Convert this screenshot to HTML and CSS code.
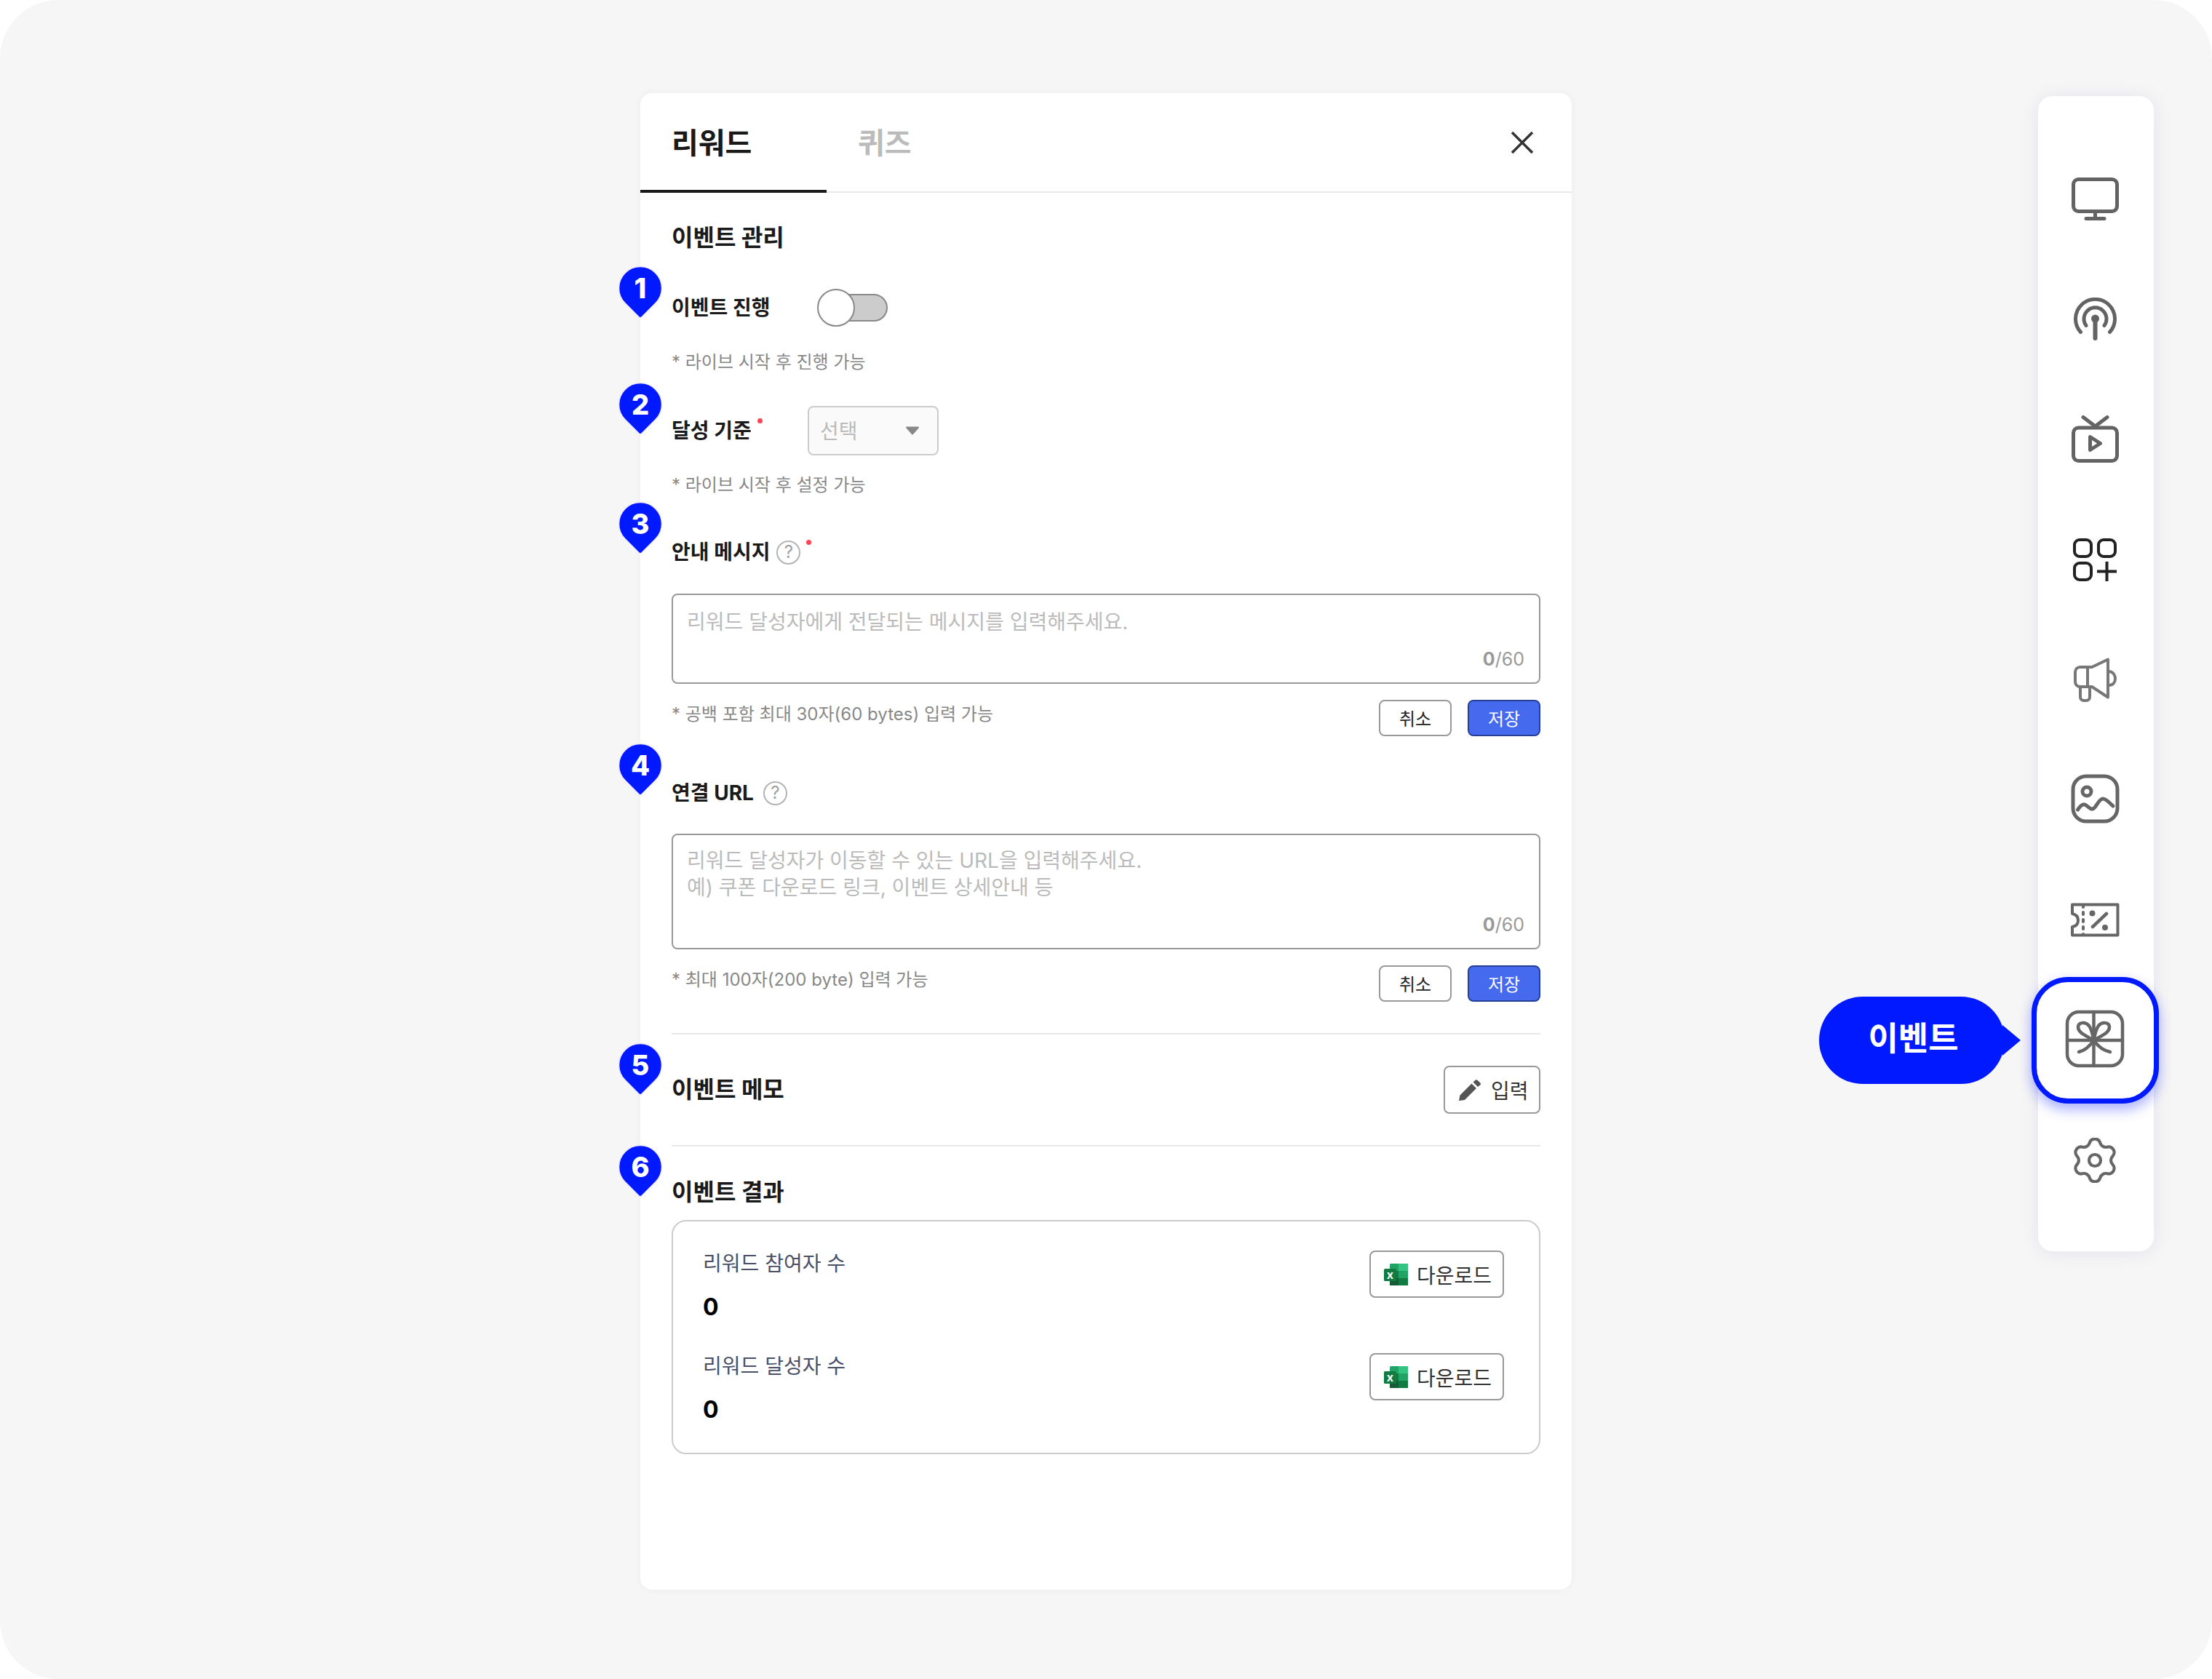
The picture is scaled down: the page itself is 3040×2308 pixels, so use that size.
FILE: index.html
```html
<!DOCTYPE html>
<html lang="ko">
<head>
<meta charset="UTF-8" />
<title>이벤트 관리</title>
<meta name="viewport" content="width=device-width, initial-scale=1" />
<link rel="stylesheet" href="styles.css">
</head>
<body>

<div class="stage">
  <main class="panel">
    <div class="tabs">
      <div class="tab tab-active">리워드</div>
      <div class="tab">퀴즈</div>
      <button class="close-btn" type="button" aria-label="닫기">
        <svg width="32" height="32" viewBox="0 0 32 32"><path d="M2 2 30 30M30 2 2 30" stroke="#333" stroke-width="3.5" fill="none"/></svg>
      </button>
    </div>

    <div class="panel-body">
      <h2 class="title title-first">이벤트 관리</h2>

      <!-- 1 -->
      <div class="row row-toggle">
        <span class="pin pin-1"><svg class="pin-shape" width="64" height="75" viewBox="0 0 64 75"><path d="M11.100 52.900A29.500 29.500 0 1 1 52.900 52.900L34 71.800Q32 73.700 30 71.800Z" fill="#0019ff" stroke="#f0e8ff" stroke-width="1.500"/></svg><span class="pin-num">1</span></span>
        <label class="row-label">이벤트 진행</label>
        <span class="toggle"><span class="toggle-track"></span><span class="toggle-knob"></span></span>
      </div>
      <p class="note note-1">* 라이브 시작 후 진행 가능</p>

      <!-- 2 -->
      <div class="row row-select">
        <span class="pin pin-2"><svg class="pin-shape" width="64" height="75" viewBox="0 0 64 75"><path d="M11.100 52.900A29.500 29.500 0 1 1 52.900 52.900L34 71.800Q32 73.700 30 71.800Z" fill="#0019ff" stroke="#f0e8ff" stroke-width="1.500"/></svg><span class="pin-num">2</span></span>
        <label class="row-label">달성 기준<i class="req"></i></label>
        <div class="select">
          <span class="select-text">선택</span>
          <svg width="20" height="12" viewBox="0 0 20 12"><path d="M2 1.500H18L10 10.500Z" fill="#888" stroke="#888" stroke-width="2" stroke-linejoin="round"/></svg>
        </div>
      </div>
      <p class="note note-2">* 라이브 시작 후 설정 가능</p>

      <!-- 3 -->
      <div class="row row-head row-msg">
        <span class="pin pin-3"><svg class="pin-shape" width="64" height="75" viewBox="0 0 64 75"><path d="M11.100 52.900A29.500 29.500 0 1 1 52.900 52.900L34 71.800Q32 73.700 30 71.800Z" fill="#0019ff" stroke="#f0e8ff" stroke-width="1.500"/></svg><span class="pin-num">3</span></span>
        <label class="row-label-auto">안내 메시지</label>
        <span class="help">?</span>
        <i class="req"></i>
      </div>
      <div class="textarea textarea-msg">
        <div class="placeholder">리워드 달성자에게 전달되는 메시지를 입력해주세요.</div>
        <div class="counter"><b>0</b>/60</div>
      </div>
      <div class="action-row">
        <p class="note">* 공백 포함 최대 30자(60 bytes) 입력 가능</p>
        <div class="actions">
          <button class="btn" type="button">취소</button>
          <button class="btn btn-primary" type="button">저장</button>
        </div>
      </div>

      <!-- 4 -->
      <div class="row row-head row-url">
        <span class="pin pin-4"><svg class="pin-shape" width="64" height="75" viewBox="0 0 64 75"><path d="M11.100 52.900A29.500 29.500 0 1 1 52.900 52.900L34 71.800Q32 73.700 30 71.800Z" fill="#0019ff" stroke="#f0e8ff" stroke-width="1.500"/></svg><span class="pin-num">4</span></span>
        <label class="row-label-auto">연결 URL</label>
        <span class="help">?</span>
      </div>
      <div class="textarea textarea-url">
        <div class="placeholder">리워드 달성자가 이동할 수 있는 URL을 입력해주세요.<br>예) 쿠폰 다운로드 링크, 이벤트 상세안내 등</div>
        <div class="counter"><b>0</b>/60</div>
      </div>
      <div class="action-row">
        <p class="note">* 최대 100자(200 byte) 입력 가능</p>
        <div class="actions">
          <button class="btn" type="button">취소</button>
          <button class="btn btn-primary" type="button">저장</button>
        </div>
      </div>

      <hr class="divider divider-1">

      <!-- 5 -->
      <div class="row row-memo">
        <span class="pin pin-5"><svg class="pin-shape" width="64" height="75" viewBox="0 0 64 75"><path d="M11.100 52.900A29.500 29.500 0 1 1 52.900 52.900L34 71.800Q32 73.700 30 71.800Z" fill="#0019ff" stroke="#f0e8ff" stroke-width="1.500"/></svg><span class="pin-num">5</span></span>
        <h2 class="title">이벤트 메모</h2>
        <button class="btn-outline btn-memo" type="button">
          <svg width="30" height="29" viewBox="0 0 30 29"><path d="M0 29 1.500 21.500 17.500 5.500 24 12 8 28 1 29ZM19.500 3.500 22.500 .8C23.500 0 24.500 0 25.500.8L29.500 4.700C30.200 5.500 30.200 6.500 29.500 7.300L26 10Z" fill="#555"/></svg>
          <span>입력</span>
        </button>
      </div>

      <hr class="divider divider-2">

      <!-- 6 -->
      <div class="result-head">
        <span class="pin pin-6"><svg class="pin-shape" width="64" height="75" viewBox="0 0 64 75"><path d="M11.100 52.900A29.500 29.500 0 1 1 52.900 52.900L34 71.800Q32 73.700 30 71.800Z" fill="#0019ff" stroke="#f0e8ff" stroke-width="1.500"/></svg><span class="pin-num">6</span></span>
        <h2 class="title">이벤트 결과</h2>
      </div>
      <section class="result-box">
        <div class="result-row">
          <div>
            <div class="result-label">리워드 참여자 수</div>
            <div class="result-value">0</div>
          </div>
          <button class="btn-outline btn-download" type="button">
            <svg width="33" height="30" viewBox="0 0 33 30"><rect x="8" width="25" height="30" rx="1.500" fill="#21a366"/><rect x="20" width="13" height="10" fill="#33c481"/><rect x="20" y="10" width="13" height="10" fill="#21a366"/><rect x="8" y="10" width="12" height="10" fill="#107c41"/><rect x="8" y="20" width="12" height="10" fill="#185c37"/><rect x="20" y="20" width="13" height="10" fill="#107c41"/><rect y="7" width="17" height="17" rx="1.500" fill="#107c41"/><text x="8.500" y="20.500" class="xl-mark">x</text></svg>
            <span>다운로드</span>
          </button>
        </div>
        <div class="result-row">
          <div>
            <div class="result-label">리워드 달성자 수</div>
            <div class="result-value">0</div>
          </div>
          <button class="btn-outline btn-download" type="button">
            <svg width="33" height="30" viewBox="0 0 33 30"><rect x="8" width="25" height="30" rx="1.500" fill="#21a366"/><rect x="20" width="13" height="10" fill="#33c481"/><rect x="20" y="10" width="13" height="10" fill="#21a366"/><rect x="8" y="10" width="12" height="10" fill="#107c41"/><rect x="8" y="20" width="12" height="10" fill="#185c37"/><rect x="20" y="20" width="13" height="10" fill="#107c41"/><rect y="7" width="17" height="17" rx="1.500" fill="#107c41"/><text x="8.500" y="20.500" class="xl-mark">x</text></svg>
            <span>다운로드</span>
          </button>
        </div>
      </section>
    </div>
  </main>

  <aside class="sidebar">
    <div class="side-item">
      <svg width="65" height="59" viewBox="0 0 65 59" fill="none" stroke="#636363" stroke-width="5" stroke-linecap="round"><rect x="2.500" y="2.500" width="60" height="44" rx="7"/><path d="M32.500 47V56M20 56.500H45"/></svg>
    </div>
    <div class="side-item">
      <svg width="59" height="59" viewBox="0 0 59 59" fill="none" stroke="#636363" stroke-width="5" stroke-linecap="round"><path d="M9.500 47.500A27 27 0 1 1 49.500 47.500"/><path d="M17 38.500A15.500 15.500 0 1 1 42 38.500"/><circle cx="29.500" cy="29" r="5.500" fill="#636363" stroke="none"/><path d="M29.500 30V56" stroke-width="6"/></svg>
    </div>
    <div class="side-item">
      <svg width="65" height="65" viewBox="0 0 65 65" fill="none" stroke="#636363" stroke-width="5" stroke-linecap="round" stroke-linejoin="round"><rect x="2.500" y="17" width="60" height="45.500" rx="7"/><path d="M16 2.500 32.500 15 49 2.500"/><path d="M25.500 29.500 39.500 38.500 25.500 47.500Z"/></svg>
    </div>
    <div class="side-item">
      <svg width="60" height="59" viewBox="0 0 60 59" fill="none" stroke="#222" stroke-width="4"><rect x="2" y="2" width="23" height="23" rx="7"/><rect x="35" y="2" width="23" height="23" rx="7"/><rect x="2" y="34" width="23" height="23" rx="7"/><path d="M46.500 32V59M33 45.500H60"/></svg>
    </div>
    <div class="side-item">
      <svg width="59" height="61" viewBox="0 0 59 61" fill="none" stroke="#777" stroke-width="4" stroke-linejoin="round"><path d="M47 2.500 25 13H9C5 13 2 16 2 20V33C2 37 5 40 9 40H25L47 54.500Z"/><path d="M19 13V40"/><path d="M9 40V54C9 57 11 59 14 59H17C20 59 22 57 22 54V40"/><path d="M48 19C54 19 57 24 57 29C57 34 54 38 48 38"/></svg>
    </div>
    <div class="side-item">
      <svg class="icon-up" width="67" height="68" viewBox="0 0 67 68" fill="none" stroke="#666" stroke-width="5" stroke-linecap="round"><rect x="3" y="3" width="61" height="62" rx="18"/><circle cx="22" cy="24" r="6"/><path d="M9.500 49C13 44 16 41 19 42C23 43 26 49 30 48C35 47 38 34 44 34C49 34 53 40 58 44"/></svg>
    </div>
    <div class="side-item">
      <svg width="68" height="47" viewBox="0 0 68 47" fill="none" stroke="#666" stroke-width="4" stroke-linecap="round" stroke-linejoin="round"><path d="M3 2.500H65.500V44.500H3V33C9 32 11 28 11 24C11 19 8 16 3 15Z"/><path d="M18 3V44" stroke-dasharray="3 7"/><path d="M31 33 50 15" stroke-width="4.500"/><circle cx="30.500" cy="14.500" r="2" fill="#666"/><circle cx="48" cy="34" r="2" fill="#666"/></svg>
    </div>
    <div class="side-item side-item-active">
      <div class="tooltip">
        <span class="tooltip-body">이벤트</span>
        <span class="tooltip-tip"></span>
      </div>
      <span class="focus-ring"></span>
      <svg class="icon-up" width="82" height="80" viewBox="0 0 82 80" fill="none" stroke="#666" stroke-width="4.500" stroke-linecap="round"><rect x="3" y="3" width="76" height="74" rx="16"/><path d="M39.500 3V77M3 42H79"/><path d="M39.500 42C30 36 18 32 18 24C18 17 28 16 33 22C36 26 38 34 39.500 42Z" fill="#fff"/><path d="M39.500 42C49 36 61 32 61 24C61 17 51 16 46 22C43 26 41 34 39.500 42Z" fill="#fff"/><path d="M39.500 42C34 50 28 56 19 58M39.500 42C45 50 52 56 62 58"/></svg>
    </div>
    <div class="side-item">
      <svg width="58" height="62" viewBox="0 0 58 62" fill="none" stroke="#666" stroke-width="4.200" stroke-linejoin="round"><path d="M21.700 7.100A7.600 7.600 0 0 1 36.300 7.100A8 8 0 0 0 46.050 12.700A7.600 7.600 0 0 1 53.350 25.400A8 8 0 0 0 53.350 36.600A7.600 7.600 0 0 1 46.050 49.300A8 8 0 0 0 36.300 54.900A7.600 7.600 0 0 1 21.700 54.900A8 8 0 0 0 11.950 49.300A7.600 7.600 0 0 1 4.650 36.600A8 8 0 0 0 4.650 25.400A7.600 7.600 0 0 1 11.950 12.700A8 8 0 0 0 21.700 7.100Z"/><circle cx="29" cy="31" r="8"/></svg>
    </div>
  </aside>
</div>

</body>
</html>
```

FILE: styles.css
```css
:root {
  --blue: #0019ff;
  --text: #1a1a1a;
  --note: #888888;
  --line: #e8e8e8;
  --btn-line: #999999;
}
* {
  box-sizing: border-box;
}
body {
  margin: 0;
  background: #ffffff;
  font-family: Inter, "Noto Sans CJK KR", sans-serif;
  color: var(--text);
}
.stage {
  width: 3040px;
  height: 2308px;
  background: #f6f6f6;
  border-radius: 80px;
  display: flex;
  align-items: flex-start;
  padding-left: 880px;
}

/* panel */
.panel {
  width: 1280px;
  height: 2057px;
  margin-top: 128px;
  background: #ffffff;
  border-radius: 16px;
  box-shadow: 0 0 10px rgba(90, 90, 140, 0.06);
  flex-shrink: 0;
}
.tabs {
  height: 137px;
  display: flex;
  border-bottom: 2px solid var(--line);
  position: relative;
}
.tab {
  width: 256px;
  height: 137px;
  padding: 44px 0 0 43px;
  font-size: 40px;
  line-height: 50px;
  font-weight: 700;
  color: #bbbbbb;
}
.tab-active {
  color: var(--text);
  border-bottom: 4px solid var(--text);
}
.close-btn {
  margin-left: auto;
  margin-right: 52px;
  margin-top: 52px;
  width: 32px;
  height: 32px;
  padding: 0;
  border: 0;
  background: none;
}
.panel-body {
  padding: 0 43px;
}

/* text rows */
.title {
  margin: 0;
  font-size: 32px;
  line-height: 46px;
  font-weight: 700;
}
.title-first {
  margin-top: 39px;
}
.row {
  display: flex;
  align-items: center;
  position: relative;
}
.row-label {
  width: 187px;
  flex-shrink: 0;
  display: flex;
  align-items: center;
  font-size: 28px;
  font-weight: 700;
  line-height: 40px;
}
.row-label-auto {
  font-size: 28px;
  font-weight: 700;
  line-height: 40px;
}
.row-toggle {
  margin-top: 47px;
  height: 52px;
}
.note {
  margin: 0;
  font-size: 24px;
  line-height: 34px;
  color: var(--note);
}
.note-1 {
  margin-top: 32px;
}
.row-select {
  margin-top: 43px;
  height: 68px;
}
.note-2 {
  margin-top: 24px;
}
.row-head {
  height: 40px;
}
.row-msg {
  margin-top: 55px;
}
.row-url {
  margin-top: 58px;
}
.row-url .help {
  margin-left: 13px;
}
.req {
  width: 7px;
  height: 7px;
  margin-left: 8px;
  margin-bottom: 28px;
  border-radius: 50%;
  background: #ff4455;
  flex-shrink: 0;
}
.help {
  width: 33px;
  height: 33px;
  margin-left: 9px;
  border: 2.5px solid #b4b4b4;
  border-radius: 50%;
  color: #a0a0a0;
  font-size: 24px;
  line-height: 28px;
  text-align: center;
}

/* numbered pins */
.pin {
  position: absolute;
  left: -75px;
  width: 64px;
  height: 75px;
  z-index: 2;
}
.pin-shape {
  display: block;
}
.pin-num {
  position: absolute;
  top: 0;
  left: 0;
  width: 64px;
  text-align: center;
  font-family: Inter, sans-serif;
  font-size: 38px;
  line-height: 64px;
  font-weight: 800;
  color: #ffffff;
}
.pin-1 { top: -33px; }
.pin-2 { top: -34px; }
.pin-3 { top: -51px; }
.pin-4 { top: -50px; }
.pin-5 { top: -33px; }
.pin-6 { top: -44px; }

/* toggle */
.toggle {
  position: relative;
  width: 97px;
  height: 52px;
  margin-left: 13px;
  display: flex;
  align-items: center;
  justify-content: flex-end;
}
.toggle-track {
  width: 85px;
  height: 38px;
  background: #cccccc;
  border: 2px solid #888888;
  border-radius: 19px;
}
.toggle-knob {
  position: absolute;
  left: 0;
  top: 0;
  width: 52px;
  height: 52px;
  background: #ffffff;
  border: 2px solid #888888;
  border-radius: 50%;
}

/* select */
.select {
  width: 180px;
  height: 68px;
  display: flex;
  align-items: center;
  justify-content: space-between;
  padding: 0 24px 0 15px;
  background: #fafafa;
  border: 2px solid #cccccc;
  border-radius: 8px;
  font-size: 28px;
  color: #bbbbbb;
}
.select-text {
  margin-bottom: 3px;
}

/* inputs */
.textarea {
  position: relative;
  border: 2px solid var(--btn-line);
  border-radius: 8px;
  padding: 17px 19px;
  margin-top: 37px;
}
.textarea-msg {
  height: 124px;
  padding-top: 19px;
}
.textarea-url {
  height: 159px;
  margin-top: 36px;
}
.placeholder {
  font-size: 28px;
  line-height: 37px;
  color: #bbbbbb;
}
.counter {
  position: absolute;
  right: 20px;
  bottom: 15px;
  font-size: 25px;
  line-height: 34px;
  color: #999999;
}
.action-row {
  display: flex;
  justify-content: space-between;
  align-items: flex-start;
  margin-top: 22px;
}
.action-row .note {
  margin-top: 3px;
}
.actions {
  display: flex;
  gap: 22px;
}
.btn {
  width: 100px;
  height: 50px;
  padding: 0 0 2px;
  border: 2px solid var(--btn-line);
  border-radius: 8px;
  background: #ffffff;
  font-family: inherit;
  font-size: 24px;
  color: #222222;
}
.btn-primary {
  background: #456aee;
  border-color: #253f99;
  color: #ffffff;
}
.divider {
  margin: 0;
  border: 0;
  height: 2px;
  background: var(--line);
}
.divider-1 {
  margin-top: 43px;
}
.divider-2 {
  margin-top: 43px;
}

/* memo + result */
.row-memo {
  margin-top: 43px;
  height: 66px;
  justify-content: space-between;
}
.btn-outline {
  display: flex;
  align-items: center;
  border: 2px solid var(--btn-line);
  border-radius: 8px;
  background: #ffffff;
  font-family: inherit;
  font-size: 28px;
  color: #333333;
  padding: 0;
}
.btn-memo {
  width: 133px;
  height: 66px;
  padding-left: 19px;
  gap: 14px;
}
.btn-download {
  width: 185px;
  height: 65px;
  padding-left: 18px;
  gap: 12px;
}
.result-head {
  position: relative;
  margin-top: 40px;
}
.result-box {
  margin-top: 15px;
  height: 322px;
  padding: 40px 48px 37px 41px;
  border: 2px solid #cccccc;
  border-radius: 20px;
  display: flex;
  flex-direction: column;
  gap: 41px;
}
.result-row {
  display: flex;
  justify-content: space-between;
  align-items: flex-start;
}
.result-label {
  font-size: 28px;
  line-height: 36px;
  color: #4a5068;
}
.result-value {
  margin-top: 20px;
  font-size: 32px;
  line-height: 44px;
  font-weight: 700;
  color: #000000;
}
.xl-mark {
  font-family: Inter, sans-serif;
  font-size: 16px;
  font-weight: 700;
  fill: #ffffff;
  text-anchor: middle;
}

/* sidebar */
.sidebar {
  width: 159px;
  height: 1588px;
  margin-top: 132px;
  margin-left: 641px;
  padding-top: 59px;
  background: #ffffff;
  border-radius: 20px;
  box-shadow: 0 2px 24px rgba(90, 90, 170, 0.12);
  flex-shrink: 0;
  display: flex;
  flex-direction: column;
}
.side-item {
  height: 165.2px;
  display: flex;
  align-items: center;
  justify-content: center;
  flex-shrink: 0;
  padding-right: 3px;
}
.icon-up {
  margin-bottom: 4px;
}
.side-item-active {
  position: relative;
}
.side-item-active svg {
  position: relative;
}
.focus-ring {
  position: absolute;
  left: -9px;
  top: -4px;
  width: 175px;
  height: 174px;
  border: 7px solid var(--blue);
  border-radius: 50px;
  box-shadow: 0 8px 18px rgba(0, 25, 255, 0.35);
  background: #ffffff;
}
.tooltip {
  position: absolute;
  right: 183px;
  top: 23px;
  height: 120px;
  display: flex;
  align-items: center;
}
.tooltip-body {
  width: 255px;
  height: 120px;
  background: var(--blue);
  border-radius: 60px;
  color: #ffffff;
  font-size: 45px;
  font-weight: 700;
  line-height: 116px;
  text-align: center;
  padding-left: 4px;
}
.tooltip-tip {
  width: 0;
  height: 0;
  margin-left: -3px;
  border-left: 25px solid var(--blue);
  border-top: 21px solid transparent;
  border-bottom: 21px solid transparent;
}
```
